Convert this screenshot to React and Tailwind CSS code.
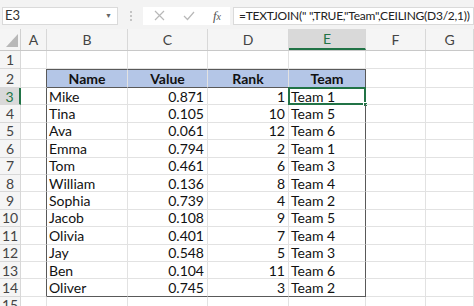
const cols = [
  { key: 'A', w: 'w-[26px]' },
  { key: 'B', w: 'w-[81px]' },
  { key: 'C', w: 'w-[80px]' },
  { key: 'D', w: 'w-[81px]' },
  { key: 'E', w: 'w-[77px]' },
  { key: 'F', w: 'w-[60px]' },
  { key: 'G', w: 'flex-1' },
];

const data = [
  ['Mike', '0.871', '1', 'Team 1'],
  ['Tina', '0.105', '10', 'Team 5'],
  ['Ava', '0.061', '12', 'Team 6'],
  ['Emma', '0.794', '2', 'Team 1'],
  ['Tom', '0.461', '6', 'Team 3'],
  ['William', '0.136', '8', 'Team 4'],
  ['Sophia', '0.739', '4', 'Team 2'],
  ['Jacob', '0.108', '9', 'Team 5'],
  ['Olivia', '0.401', '7', 'Team 4'],
  ['Jay', '0.548', '5', 'Team 3'],
  ['Ben', '0.104', '11', 'Team 6'],
  ['Oliver', '0.745', '3', 'Team 2'],
];

function FormulaBar() {
  return (
    <div className="flex h-[29px] items-center bg-[#f3f3f3] pt-[2px] pl-[2px]">
      <div className="flex h-[18px] w-[116px] shrink-0 items-center justify-between border border-[#dadada] bg-white pl-[2px] pr-[5px] text-[13px] text-[#333]">
        <span>E3</span>
        <span className="text-[7px] text-[#666]">▼</span>
      </div>
      <div className="flex w-[25px] shrink-0 flex-col items-center gap-[2px]">
        <span className="h-[2px] w-[2px] rounded-full bg-[#b5b5b5]" />
        <span className="h-[2px] w-[2px] rounded-full bg-[#b5b5b5]" />
        <span className="h-[2px] w-[2px] rounded-full bg-[#b5b5b5]" />
      </div>
      <div className="flex h-[18px] w-[87px] shrink-0 items-center justify-around bg-white pl-[2px]">
        <svg width="11" height="11" viewBox="0 0 11 11" stroke="#b8b8b8" strokeWidth="1.2">
          <path d="M1 1 L10 10 M10 1 L1 10" />
        </svg>
        <svg width="12" height="10" viewBox="0 0 12 10" fill="none" stroke="#b8b8b8" strokeWidth="1.2">
          <path d="M1 5 L4.5 8.5 L11 1" />
        </svg>
        <span className="font-['Liberation_Serif'] text-[13px] italic text-[#555]">
          f<span className="text-[10px]">x</span>
        </span>
      </div>
      <div className="ml-[3px] flex h-[18px] min-w-0 flex-1 items-center overflow-hidden whitespace-nowrap border border-[#dadada] bg-white pl-[5px] text-[12px] tracking-[-0.25px] text-[#222]">
        =TEXTJOIN(" ",TRUE,"Team",CEILING(D3/2,1))
      </div>
    </div>
  );
}

function ColumnHeaders() {
  return (
    <div className="flex h-[22px] border-b border-[#c8c8c8] bg-[#f5f5f5] text-[14px] text-[#444]">
      <div className="flex w-[21px] items-end justify-end border-r border-[#d0d0d0] pb-[3px] pr-[2px]">
        <svg width="12" height="13" viewBox="0 0 12 13">
          <path d="M12 0 L12 13 L0 13 Z" fill="#b8b8b8" />
        </svg>
      </div>
      {cols.map((c) => (
        <div
          key={c.key}
          className={`${c.w} flex items-center justify-center border-r border-[#d8d8d8] ${
            c.key === 'E' ? 'border-b-2 border-b-[#217346] bg-[#d9d9d9] text-[#217346]' : ''
          }`}
        >
          {c.key}
        </div>
      ))}
    </div>
  );
}

function Row({ n, h, cells, header, last }) {
  const selectedRow = n === 3;
  return (
    <div className={`flex ${h}`}>
      <div
        className={`flex w-[21px] items-center justify-center border-b border-r border-[#d8d8d8] text-[14px] text-[#444] ${
          selectedRow ? 'border-r-2 border-r-[#217346] bg-[#d9d9d9] text-[#217346]' : 'bg-[#f5f5f5]'
        }`}
      >
        {n}
      </div>
      {cols.map((c, i) => {
        const inTable = cells && i >= 1 && i <= 4;
        const text = inTable ? cells[i - 1] : '';
        let cls = 'border-b border-r border-[#e2e2e2]';
        if (cells && c.key === 'A') cls += ' border-r-[#595959]';
        if (inTable) {
          if (i === 4) cls += ' border-r-[#595959]';
          if (header) cls += ' border-t border-t-[#595959] border-b-[#595959] bg-[#b4c6e7]';
          if (last) cls += ' border-b-[#595959]';
        }
        let align = 'justify-start pl-[2px]';
        if (header) align = 'justify-center font-bold';
        else if (i === 2 || i === 3) align = 'justify-end pr-[3px]';
        const sel = n === 3 && c.key === 'E';
        return (
          <div key={c.key} className={`${c.w} relative flex items-center ${cls} ${align} text-[14px] text-[#111]`}>
            {text}
            {sel && (
              <div className="pointer-events-none absolute inset-[-1px] border-2 border-[#217346]">
                <div className="absolute bottom-[-4px] right-[-4px] h-[5px] w-[5px] border border-white bg-[#217346]" />
              </div>
            )}
          </div>
        );
      })}
    </div>
  );
}

export default function App() {
  return (
    <div className="h-[306px] w-[474px] overflow-hidden bg-white font-['Lato',sans-serif]">
      <FormulaBar />
      <ColumnHeaders />
      <Row n={1} h="h-[18px]" />
      <Row n={2} h="h-[19px]" cells={['Name', 'Value', 'Rank', 'Team']} header />
      {data.map((d, i) => (
        <Row key={i} n={i + 3} h="h-[17.4px]" cells={d} last={i === data.length - 1} />
      ))}
      <Row n={15} h="h-[17.4px]" />
    </div>
  );
}
